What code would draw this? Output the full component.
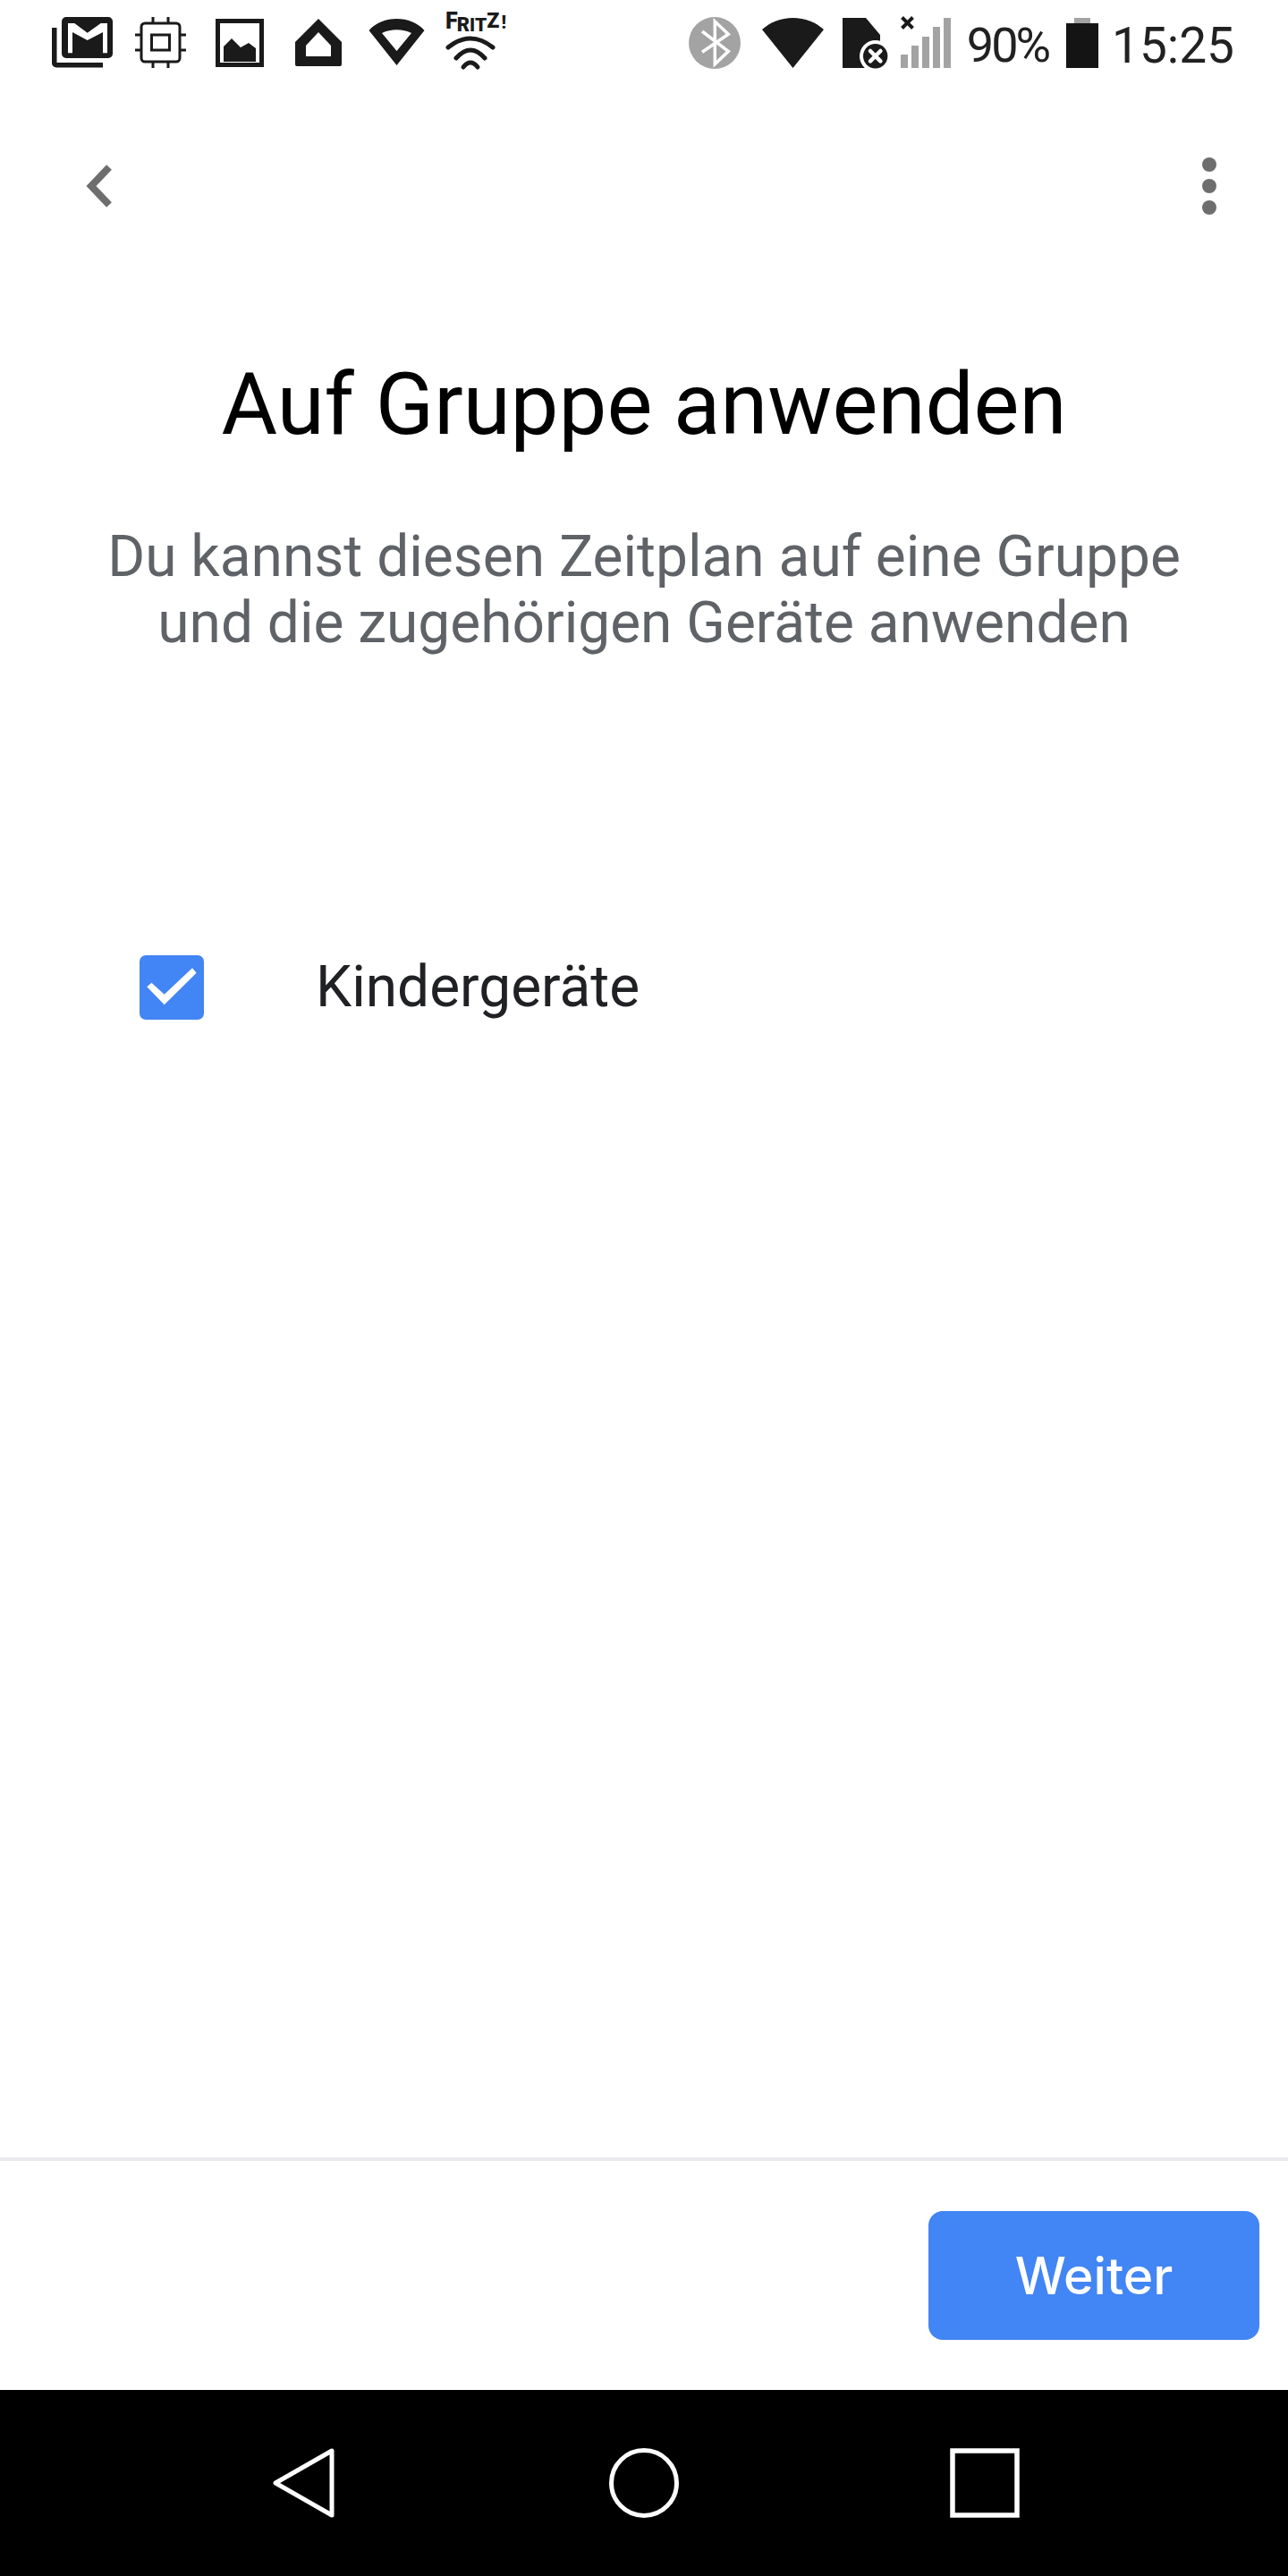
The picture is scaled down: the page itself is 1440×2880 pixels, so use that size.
<div class="phone">
  <header class="status">
    <div class="status-left">
      <svg class="ic gmail" viewBox="0 0 68 57"><path d="M0 12h5.500v39H57v5.500H5a5 5 0 0 1-5-5z" fill="#1a1a1a"/><path fill-rule="evenodd" d="M16 0h47a5 5 0 0 1 5 5v36a5 5 0 0 1-5 5H16a5 5 0 0 1-5-5V5a5 5 0 0 1 5-5zM18 7v33.300h5V17l16.700 9L57 17v23.300h5V7h-7.300L39.700 17.700 25.300 7z" fill="#1a1a1a"/></svg>
      <svg class="ic chip" viewBox="0 0 57 57"><g fill="none" stroke="#1a1a1a"><rect x="7" y="7" width="43" height="43" rx="4" stroke-width="3"/><rect x="18.500" y="20" width="20" height="17" stroke-width="3"/><path d="M20 0v7M37 0v7M20 50v7M37 50v7M0 20h7M0 37h7M50 20h7M50 37h7" stroke-width="3"/></g></svg>
      <svg class="ic img" viewBox="0 0 54 54"><path fill-rule="evenodd" d="M0 0h54v54H0zM5 5v44h44V5z" fill="#1a1a1a"/><path d="M9 31l9-9 10 10 9-5 8 6v15H9z" fill="#1a1a1a"/></svg>
      <svg class="ic home" viewBox="0 0 52 53"><path fill-rule="evenodd" d="M26 0l26 26v25a2 2 0 0 1-2 2H2a2 2 0 0 1-2-2V26zM26 15L12 30v12h28V30z" fill="#1a1a1a"/></svg>
      <svg class="ic wifi1" viewBox="0 0 63 52"><path fill-rule="evenodd" d="M31.500 0c12 0 23 4 31 13L31.500 52 .5 13C8.500 4 19.500 0 31.500 0zM15 16l16.500 20L48 16c-10-5-23-5-33 0z" fill="#1a1a1a"/></svg>
      <div class="fritz">
        <div class="fritz-label"><span class="f">F</span><span class="r">R</span><span class="i">I</span><span class="t">T</span><span class="z">Z</span><span class="x">!</span></div>
        <svg viewBox="0 0 56 38"><g fill="none" stroke="#1a1a1a" stroke-width="5" stroke-linecap="round"><path d="M3 13Q28-7 53 13"/><path d="M12 25Q28 7 44 25"/><path d="M20 35Q28 25 36 35"/></g></svg>
      </div>
    </div>
    <div class="status-right">
      <svg class="ic bt" viewBox="0 0 58 58"><circle cx="29" cy="29" r="29" fill="#a3a3a3"/><path d="M15 16l29.300 22.300-15 14.400V5l15 14.300L15 39.300" fill="none" stroke="#fff" stroke-width="3.500"/></svg>
      <svg class="ic wifi2" viewBox="0 0 69 56"><path d="M34.500 0C48 0 60 5 69 13L34.500 56 0 13C9 5 21 0 34.500 0z" fill="#1a1a1a"/></svg>
      <svg class="ic sim" viewBox="0 0 52 58"><path d="M0 0h26l16 19v37H0z" fill="#1a1a1a"/><circle cx="36.700" cy="42.700" r="17.700" fill="#fff"/><circle cx="36.700" cy="42.700" r="13.700" fill="#1a1a1a"/><path d="M31 37l11.400 11.400M42.400 37L31 48.400" stroke="#fff" stroke-width="4.500" stroke-linecap="round"/></svg>
      <svg class="ic signal" viewBox="0 -2 58 58"><path d="M2.500-.5l12 12M14.500-.5l-12 12" stroke="#1a1a1a" stroke-width="4"/><path d="M1 41h8v15H1zM13 31h8v25h-8zM25 21h8v35h-8zM37 10h8v46h-8zM49 0h8v56h-8z" fill="#a3a3a3"/></svg>
      <span class="pct">90%</span>
      <div class="battery"><span class="cap"></span><span class="body"></span></div>
      <span class="time">15:25</span>
    </div>
  </header>

  <div class="toolbar">
    <svg class="back" viewBox="0 0 30 50"><path d="M26 4L6 25l20 21" fill="none" stroke="#6e6e6e" stroke-width="8"/></svg>
    <div class="more"><span></span><span></span><span></span></div>
  </div>

  <main class="content">
    <h1>Auf Gruppe anwenden</h1>
    <p>Du kannst diesen Zeitplan auf eine Gruppe<br/>und die zugehörigen Geräte anwenden</p>
    <div class="option">
      <span class="check"><svg viewBox="0 0 72 72"><path d="M13.400 30.700L8.300 35.300 27.700 55.300 63.600 19.700 59 14.300 27.700 43.700z" fill="#fff"/></svg></span>
      <span class="label">Kindergeräte</span>
    </div>
  </main>

  <footer class="actions">
    <button>Weiter</button>
  </footer>

  <nav class="navbar">
    <svg class="nav-ic" viewBox="0 0 70 78"><path d="M67 3v72L4 39z" fill="none" stroke="#fff" stroke-width="5" stroke-linejoin="round"/></svg>
    <svg class="nav-ic" viewBox="0 0 78 78"><circle cx="39" cy="39" r="36.500" fill="none" stroke="#fff" stroke-width="5"/></svg>
    <svg class="nav-ic" viewBox="0 0 78 78"><rect x="3" y="3" width="72" height="72" fill="none" stroke="#fff" stroke-width="5.500"/></svg>
  </nav>
</div>

<style>
  :global(body) { margin: 0; background: #fff; }
  .phone { width: 1440px; height: 2880px; display: flex; flex-direction: column; font-family: Roboto, "Liberation Sans", sans-serif; background: #fff; }
  .status { height: 96px; flex: none; display: flex; justify-content: space-between; box-sizing: border-box; padding: 14px 60px 0 58px; }
  .status-left, .status-right { display: flex; align-items: flex-start; }
  .ic { display: block; flex: none; }
  .gmail { width: 68px; height: 57px; margin-top: 5px; }
  .chip { width: 57px; height: 57px; margin: 5px 0 0 25px; }
  .img { width: 54px; height: 54px; margin: 7px 0 0 33px; }
  .home { width: 52px; height: 53px; margin: 7px 0 0 35px; }
  .wifi1 { width: 63px; height: 52px; margin: 7px 0 0 30px; }
  .fritz { margin-left: 23px; width: 69px; display: flex; flex-direction: column; align-items: flex-start; }
  .fritz-label { height: 26px; display: flex; align-items: flex-start; color: #1a1a1a; font-family: Roboto, sans-serif; font-weight: 900; line-height: 20px; }
  .fritz-label .f { font-size: 25px; }
  .fritz-label .r { font-size: 22px; margin: 4px 0 0 -1px; }
  .fritz-label .i { font-size: 20px; margin: 4px 0 0 0; }
  .fritz-label .t { font-size: 21px; margin: 4px 0 0 0; }
  .fritz-label .z { font-size: 23px; margin: 0 0 0 0; }
  .fritz-label .x { font-size: 20px; margin: 1px 0 0 2px; }
  .fritz svg { width: 56px; height: 38px; display: block; overflow: visible; }
  .bt { width: 58px; height: 58px; margin-top: 5px; }
  .wifi2 { width: 69px; height: 56px; margin: 6px 0 0 24px; }
  .sim { width: 52px; height: 58px; margin: 6px 0 0 21px; }
  .signal { width: 58px; height: 58px; margin: 4px 0 0 12px; overflow: visible; }
  .pct { font-size: 54px; line-height: 58px; margin: 8px 0 0 17px; color: #212121; letter-spacing: -3px; }
  .battery { width: 36px; height: 56px; margin: 6px 0 0 20px; display: flex; flex-direction: column; align-items: center; }
  .battery .cap { width: 18px; height: 6px; background: #a3a3a3; }
  .battery .body { width: 36px; height: 50px; background: #141414; }
  .time { font-size: 55px; line-height: 58px; margin: 8px 0 0 15px; color: #212121; }

  .toolbar { height: 224px; flex: none; display: flex; justify-content: space-between; align-items: center; box-sizing: border-box; padding: 0 80px 0 96px; }
  .back { width: 30px; height: 50px; display: block; }
  .more { display: flex; flex-direction: column; gap: 8px; }
  .more span { width: 16px; height: 16px; border-radius: 50%; background: #6e6e6e; display: block; }

  .content { flex: 1; display: flex; flex-direction: column; align-items: center; }
  h1 { margin: 74px 0 0; font-weight: 400; font-size: 96px; line-height: 116px; color: #000; text-align: center; }
  p { margin: 76px 0 0; font-size: 64px; line-height: 74px; color: #5f6368; text-align: center; }
  .option { align-self: flex-start; display: flex; align-items: center; margin: 334px 0 0 156px; }
  .check { width: 72px; height: 72px; border-radius: 7px; background: #4285f4; display: block; }
  .check svg { width: 72px; height: 72px; display: block; }
  .label { font-size: 64px; line-height: 72px; color: #202124; margin-left: 125px; }

  .actions { height: 260px; flex: none; box-sizing: border-box; border-top: 4px solid #e8eaed; display: flex; justify-content: flex-end; align-items: center; padding-right: 32px; }
  button { width: 370px; height: 144px; border: 0; border-radius: 16px; background: #4285f4; color: #fff; font: 500 57px Inter, sans-serif; padding: 0; }

  .navbar { height: 208px; flex: none; background: #000; box-sizing: border-box; display: flex; align-items: center; justify-content: flex-start; padding: 0 0 0 304px; }
  .nav-ic { height: 78px; width: 78px; display: block; }
  .nav-ic:first-child { width: 70px; }
  .nav-ic:nth-child(2) { margin-left: 307px; }
  .nav-ic:nth-child(3) { margin-left: 303px; }
</style>
